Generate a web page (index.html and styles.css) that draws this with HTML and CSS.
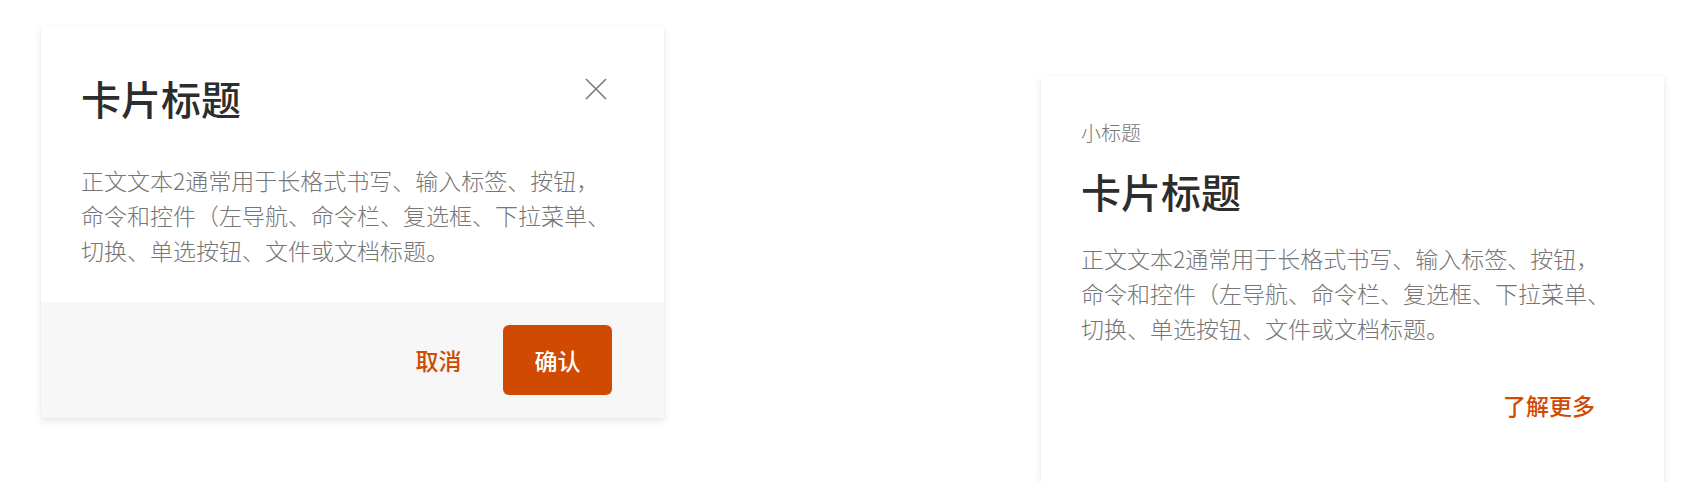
FILE: index.html
```html
<!DOCTYPE html>
<html lang="zh-CN">
<head>
<meta charset="utf-8">
<title>卡片</title>
<link rel="stylesheet" href="styles.css">
</head>
<body>
<div class="page">
  <section class="card card-dialog">
    <div class="card-body">
      <div class="card-head">
        <h2 class="card-title">卡片标题</h2>
        <button class="close-btn" aria-label="关闭">
          <svg width="22" height="22" viewBox="0 0 22 22"><path d="M1 1 L21 21 M21 1 L1 21" stroke="#7a7a7a" stroke-width="1.6" fill="none"/></svg>
        </button>
      </div>
      <p class="card-text">正文文本2通常用于长格式书写、输入标签、按钮，命令和控件（左导航、命令栏、复选框、下拉菜单、切换、单选按钮、文件或文档标题。</p>
    </div>
    <div class="card-footer">
      <button class="btn btn-text">取消</button>
      <button class="btn btn-primary">确认</button>
    </div>
  </section>

  <section class="card card-info">
    <div class="card-subtitle">小标题</div>
    <h2 class="card-title">卡片标题</h2>
    <p class="card-text">正文文本2通常用于长格式书写、输入标签、按钮，命令和控件（左导航、命令栏、复选框、下拉菜单、切换、单选按钮、文件或文档标题。</p>
    <div class="card-actions">
      <a class="link-more" href="#">了解更多</a>
    </div>
  </section>
</div>
</body>
</html>
```

FILE: styles.css
```css
* { box-sizing: border-box; }
html, body {
  margin: 0;
  padding: 0;
  background: #ffffff;
}
body {
  font-family: "Noto Sans CJK SC", "Noto Sans", sans-serif;
  color: #2d2d2d;
}
.page {
  display: flex;
  align-items: flex-start;
  gap: 377px;
  padding: 26px 36px 0 41px;
}
.card {
  width: 623px;
  background: #ffffff;
  box-shadow: 0 4px 8px rgba(0, 0, 0, 0.09), 0 0 2px rgba(0, 0, 0, 0.05);
}
.card-title {
  margin: 0;
  font-size: 40px;
  line-height: 56px;
  font-weight: 500;
  color: #2d2d2d;
}
.card-text {
  margin: 0;
  max-width: 535px;
  font-size: 23px;
  line-height: 35px;
  font-weight: 300;
  color: #767676;
}

/* dialog card */
.card-dialog .card-body {
  padding: 44px 40px 34px 40px;
}
.card-head {
  display: flex;
  justify-content: space-between;
  align-items: flex-start;
}
.close-btn {
  margin-top: 8px;
  margin-right: 17px;
  width: 22px;
  height: 22px;
  padding: 0;
  border: 0;
  background: none;
  display: flex;
}
.card-dialog .card-text {
  margin-top: 37px;
}
.card-footer {
  display: flex;
  justify-content: flex-end;
  gap: 10px;
  padding: 23px 52px 23px 40px;
  background: #f7f7f7;
}
.btn {
  width: 109px;
  height: 70px;
  border: 0;
  border-radius: 6px;
  font-family: inherit;
  font-size: 23px;
  font-weight: 500;
  cursor: pointer;
}
.btn-text {
  background: transparent;
  color: #d04a02;
}
.btn-primary {
  background: #d04a02;
  color: #ffffff;
}

/* info card */
.card-info {
  margin-top: 50px;
  padding: 43px 40px 61px 40px;
}
.card-subtitle {
  font-size: 20px;
  line-height: 28px;
  font-weight: 300;
  color: #767676;
}
.card-info .card-title {
  margin-top: 16px;
}
.card-info .card-text {
  margin-top: 22px;
}
.card-actions {
  display: flex;
  justify-content: flex-end;
  margin-top: 43px;
  padding-right: 29px;
}
.link-more {
  font-size: 23px;
  line-height: 32px;
  font-weight: 500;
  color: #d04a02;
  text-decoration: none;
}
```
